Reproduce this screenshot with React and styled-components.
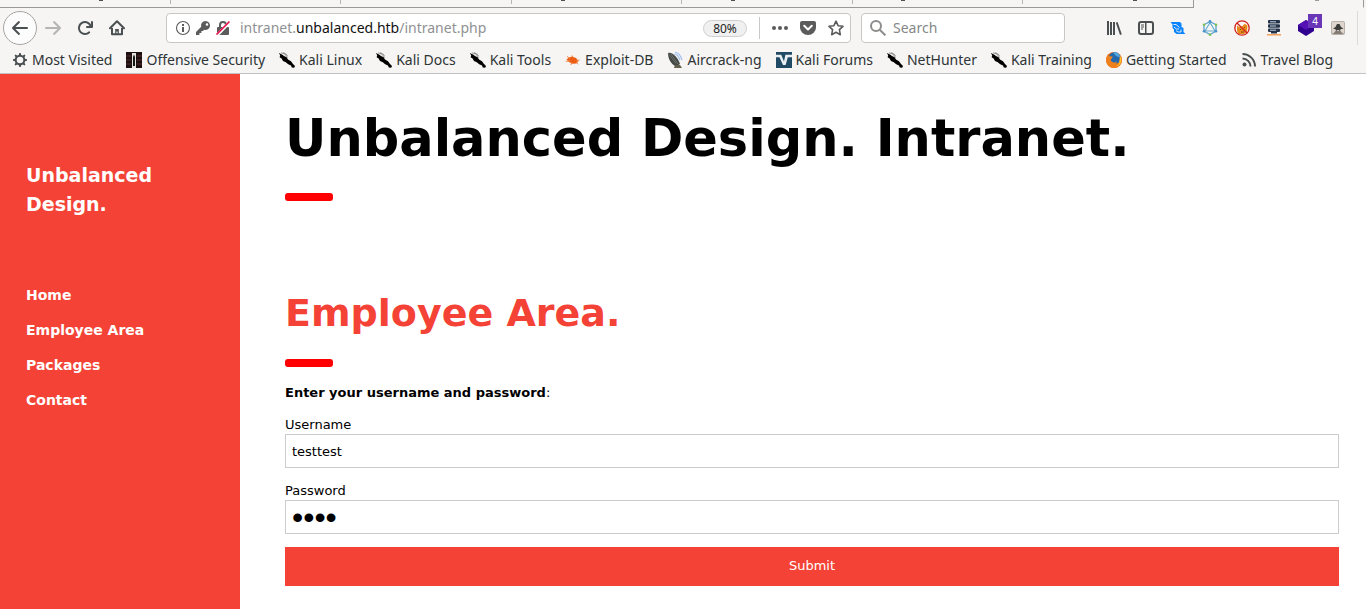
import React from "react";
import styled, { createGlobalStyle } from "styled-components";

const GlobalStyle = createGlobalStyle`
  * { box-sizing: border-box; }
  body {
    margin: 0;
    background: #fff;
    color: #000;
    font-family: "DejaVu Sans", Verdana, sans-serif;
    font-size: 13px;
    line-height: 19px;
  }
  h1, h2, h3, p { margin: 0; }
`;

const Window = styled.div`
  min-height: 100vh;
  display: flex;
  flex-direction: column;
`;

const Chrome = styled.header`
  background: #f6f5f4;
  border-bottom: 1px solid #c4c2c0;
  font-family: "Noto Sans", sans-serif;
  font-size: 14px;
  line-height: 20px;
  color: #2e3436;
`;

const TabStrip = styled.div`
  height: 8px;
  display: grid;
  grid-template-columns: repeat(8, 1fr);
  padding-right: 2px;
`;

const Tab = styled.div`
  border-bottom: 1px solid ${(p) => (p.$active ? "transparent" : "#989898")};
  border-right: ${(p) => (p.$active ? "1px solid #989898" : "0")};
  display: flex;
  justify-content: flex-end;
  &::after {
    content: "";
    width: ${(p) => (p.$active ? 0 : 1)}px;
    height: ${(p) => (p.$last ? 7 : 4)}px;
    background: ${(p) => (p.$last ? "#989898" : "#b8b6b4")};
  }
`;

const TabMark = styled.span`
  width: 4px;
  height: 1px;
  margin-right: ${(p) => p.$gap}px;
  background: ${(p) => (p.$dim ? "#9a9c9c" : "#4c5052")};
`;

const NavBar = styled.div`
  height: 40px;
  display: flex;
  align-items: center;
  padding: 0 8px 0 3px;
`;

const IconButton = styled.button`
  width: 32px;
  height: 32px;
  padding: 0;
  border: 0;
  background: none;
  display: flex;
  align-items: center;
  justify-content: center;
  position: relative;
  flex: none;
`;

const BackButton = styled(IconButton)`
  width: 34px;
  height: 34px;
  background: #fcfcfc;
  border: 1px solid #a5a5a3;
  border-radius: 50%;
`;

const AddressBar = styled.div`
  flex: 1;
  min-width: 0;
  height: 30px;
  margin-left: 33px;
  padding: 0 6px 0 8px;
  display: flex;
  align-items: center;
  gap: 4px;
  background: #fff;
  border: 1px solid #c9c6c3;
  border-radius: 4px;
`;

const Address = styled.div`
  flex: 1;
  min-width: 0;
  padding-left: 5px;
  overflow: hidden;
  white-space: nowrap;
  color: #8f9192;
  b { font-weight: 400; color: #111; }
`;

const ZoomBadge = styled.button`
  width: 44px;
  height: 17px;
  padding: 0;
  border: 1px solid #cfcfcf;
  border-radius: 9px;
  background: #f0f0f0;
  color: #222;
  font: 12px/15px "Noto Sans", sans-serif;
`;

const Divider = styled.span`
  width: 1px;
  height: ${(p) => p.$height}px;
  background: ${(p) => p.$color};
`;

const UrlActions = styled.div`
  display: flex;
  align-items: center;
  gap: 12px;
  margin-left: 8px;
  button { width: 16px; }
`;

const SearchBox = styled.label`
  width: 204px;
  height: 30px;
  margin-left: 10px;
  padding: 0 8px;
  display: flex;
  align-items: center;
  gap: 7px;
  background: #fff;
  border: 1px solid #c9c6c3;
  border-radius: 4px;
`;

const SearchInput = styled.input`
  flex: 1;
  min-width: 0;
  padding: 0;
  border: 0;
  outline: 0;
  background: none;
  font: 14px/20px "Noto Sans", sans-serif;
  &::placeholder { color: #858788; opacity: 1; }
`;

const Tools = styled.div`
  display: flex;
  align-items: center;
  margin-left: 33px;
  > span { margin-left: 3px; }
`;

const Count = styled.span`
  position: absolute;
  left: 18px;
  top: 2px;
  width: 14px;
  height: 14px;
  background: #6b35b8;
  color: #fff;
  font: 10px/14px "Noto Sans", sans-serif;
  text-align: center;
`;

const Bookmarks = styled.nav`
  height: 25px;
  padding: 0 12px 1px;
  display: flex;
  align-items: center;
  gap: 14px;
  overflow: hidden;
`;

const Bookmark = styled.a`
  display: flex;
  align-items: center;
  gap: 4px;
  color: #2e3436;
  text-decoration: none;
  white-space: nowrap;
  svg { flex: none; }
`;

const Page = styled.div`
  flex: 1;
  display: flex;
`;

const Sidebar = styled.aside`
  width: 240px;
  flex: none;
  padding: 87px 26px 0;
  background: #f44336;
  color: #fff;
`;

const Brand = styled.h3`
  font-size: 19px;
  line-height: 29px;
`;

const Menu = styled.nav`
  margin-top: 59px;
  display: flex;
  flex-direction: column;
`;

const MenuLink = styled.a`
  color: #fff;
  font-size: 14px;
  line-height: 35px;
  font-weight: 700;
  text-decoration: none;
`;

const Main = styled.main`
  flex: 1;
  min-width: 0;
  padding: 26px 27px 20px 45px;
`;

const Title = styled.h1`
  font-size: 51px;
  line-height: 77px;
`;

const AreaTitle = styled.h2`
  margin-top: 84px;
  font-size: 38px;
  line-height: 57px;
  color: #f44336;
`;

const Rule = styled.hr`
  width: 48px;
  height: 8px;
  margin: ${(p) => p.$top}px 0 0;
  border: 0;
  border-radius: 3px;
  background: #f00;
`;

const Form = styled.form`
  margin-top: 16px;
  display: flex;
  flex-direction: column;
  gap: 13px;
`;

const Field = styled.div`
  display: flex;
  flex-direction: column;
`;

const TextInput = styled.input`
  width: 100%;
  height: 34px;
  padding: 6px;
  border: 1px solid #ccc;
  border-radius: 0;
  outline: 0;
  background: #fff;
  color: #000;
  font: 13px/19px "DejaVu Sans", sans-serif;
  &[type="password"] { font: 32px/20px "Liberation Sans", sans-serif; }
`;

const Submit = styled.button`
  height: 39px;
  padding: 0 0 2px;
  border: 0;
  background: #f44336;
  color: #fff;
  font: 13px/19px "DejaVu Sans", sans-serif;
`;

const Icon = ({ children, fill = "#4a4f51", size = 16 }) => (
  <svg width={size} height={size} viewBox="0 0 16 16" fill={fill} aria-hidden="true">{children}</svg>
);

const arrow = "M15 7H3.4l4.3-4.3a1 1 0 0 0-1.4-1.4l-6 6a1 1 0 0 0 0 1.4l6 6a1 1 0 0 0 1.4-1.4L3.4 9H15a1 1 0 0 0 0-2z";

const BackIcon = () => <Icon><path d={arrow} /></Icon>;
const ForwardIcon = () => <Icon fill="#b4b4b3"><path d={arrow} transform="matrix(-1 0 0 1 16 0)" /></Icon>;
const ReloadIcon = () => (
  <Icon><path d="M15 1a1 1 0 0 0-1 1v2.4A7 7 0 1 0 8 15a7 7 0 0 0 4.95-2.05 1 1 0 0 0-1.4-1.4A5 5 0 1 1 12.5 6H10a1 1 0 0 0 0 2h5a1 1 0 0 0 1-1V2a1 1 0 0 0-1-1z" /></Icon>
);
const HomeIcon = () => (
  <Icon>
    <path d="M1 8.2 8 1.3l7 6.9" fill="none" stroke="#4a4f51" strokeWidth="2" strokeLinecap="round" strokeLinejoin="round" />
    <path d="M3 8v6.2h10V8" fill="none" stroke="#4a4f51" strokeWidth="2" strokeLinejoin="round" />
    <path d="M6.2 9h3.6v5H8.6v-2.4H7.4V14H6.2z" />
  </Icon>
);
const InfoIcon = () => (
  <Icon fill="#5b5b5b">
    <circle cx="8" cy="8" r="6.5" fill="none" stroke="#5b5b5b" strokeWidth="1.1" />
    <path d="M7 4h2v2H7zM7 7h2v5H7z" />
  </Icon>
);
const KeyIcon = () => (
  <Icon fill="#5b5b5b"><path fillRule="evenodd" d="M10.5 1a4.5 4.5 0 0 0-4.3 5.8L1 12v3h3.4v-2h2v-2h1.6l1.2-1.2A4.5 4.5 0 1 0 10.5 1zm1.5 2.2a1.3 1.3 0 1 1 0 2.6 1.3 1.3 0 0 1 0-2.6z" /></Icon>
);
const LockIcon = () => (
  <Icon fill="#5b5b5b">
    <path fillRule="evenodd" d="M4 7V5a4 4 0 0 1 8 0v2h1a1 1 0 0 1 1 1v6a1 1 0 0 1-1 1H3a1 1 0 0 1-1-1V8a1 1 0 0 1 1-1zm2 0h4V5a2 2 0 0 0-4 0z" />
    <path d="M2 15.4 14.8 2" stroke="#fff" strokeWidth="3" />
    <path d="M1.5 14.5 14.5 1.5" stroke="#e8124c" strokeWidth="1.7" />
  </Icon>
);
const DotsIcon = () => <Icon fill="#5b5b5b"><circle cx="2" cy="8" r="2" /><circle cx="8" cy="8" r="2" /><circle cx="14" cy="8" r="2" /></Icon>;
const PocketIcon = () => (
  <Icon fill="#5b5b5b">
    <path d="M2 1h12a2 2 0 0 1 2 2v4.5a8 7.5 0 0 1-16 0V3a2 2 0 0 1 2-2z" />
    <path d="m4.2 5.8 3.8 3.6 3.8-3.6" fill="none" stroke="#fff" strokeWidth="2" strokeLinecap="round" strokeLinejoin="round" />
  </Icon>
);
const StarIcon = () => (
  <Icon><path d="m8 1.2 2.1 4.5 4.9.6-3.6 3.4.9 5L8 12.3l-4.3 2.4.9-5L1 6.3l4.9-.6z" fill="none" stroke="#5b5b5b" strokeWidth="1.6" strokeLinejoin="round" /></Icon>
);
const SearchIcon = () => (
  <Icon><g fill="none" stroke="#8d8d8c" strokeWidth="2"><circle cx="6" cy="6" r="5" /><path d="m9.8 9.8 5.6 5.6" /></g></Icon>
);
const LibraryIcon = () => <Icon><path d="M1 1h2v14H1zM4 2h2v13H4zM7 2h2v13H7zM9.8 2.8l1.8-.7 4.2 12.2-1.8.7z" /></Icon>;
const SidebarIcon = () => (
  <Icon>
    <rect x="1" y="2" width="14" height="12" rx="2" fill="none" stroke="#4a4f51" strokeWidth="2" />
    <path d="M7 2h1.5v12H7zM3 4.5h3v1H3zM3 6.5h3v1H3zM3 8.5h2v1H3z" />
  </Icon>
);
const ProxyIcon = () => (
  <Icon fill="#0a84ff">
    <path d="M.5 2H10l1.5 1.5V7l2 1v4l2 2H6.5L4 12V9.5L2.5 8V4.5z" />
    <path d="M3.5 4.5H6l3.5 3M4 7l2.5 2H9m-3 1.5 2 1.5h3V9.5" fill="none" stroke="#f6f5f4" strokeWidth=".9" />
  </Icon>
);
const HexIcon = () => (
  <Icon>
    <path d="m8 1.5 6 3.3v6.4l-6 3.3-6-3.3V4.8z" fill="none" stroke="#5ba0cc" strokeWidth="1.3" />
    <path d="M8 2.5 13 11H3z" fill="none" stroke="#60a9cf" strokeWidth="1.1" />
    <g fill="#7cc251"><circle cx="2" cy="4.7" r="1.3" /><circle cx="14" cy="4.7" r="1.3" /><circle cx="8" cy="14.7" r="1.3" /></g>
    <g fill="#4a92c8"><circle cx="8" cy="1.4" r="1.3" /><circle cx="2" cy="11.2" r="1.3" /><circle cx="14" cy="11.2" r="1.3" /></g>
  </Icon>
);
const BlockIcon = () => (
  <Icon>
    <path d="M3 5.5 5.2 7l3-.7 2.5-2.5 2.8 1.7-.5 6L10 14H4.5L3 11z" fill="#e98a1d" />
    <path d="m6 9 1 1m3-3 1 1m-4 4h3" stroke="#81501d" />
    <circle cx="8" cy="8" r="7.2" fill="none" stroke="#d3211c" strokeWidth="1.3" />
    <path d="m3 3 10 10" stroke="#d3211c" strokeWidth="1.3" />
  </Icon>
);
const ServerIcon = () => (
  <Icon>
    <g fill="#233248"><rect x="2" width="12" height="3.5" rx="1" /><rect x="2" y="4.2" width="12" height="3.5" rx="1" /><rect x="2" y="8.4" width="12" height="3.5" rx="1" /><path d="M5 12h6v1.5H5z" /></g>
    <path d="M4 1.8h6M4 6h6m-6 4.2h6" stroke="#bfd0e2" />
    <path d="M1 14.8h14" stroke="#f29a4e" strokeWidth="1.4" />
  </Icon>
);
const LayersIcon = () => (
  <Icon><path d="m8 0 8 5v6l-8 5-8-5V5z" fill="#30008f" /><path d="m8 0 8 5-8 5-8-5z" fill="#5411b4" /></Icon>
);
const SpyIcon = () => (
  <Icon>
    <rect x="1" y="1" width="14" height="14" rx="2" fill="#b9b0a8" />
    <rect x="2" y="2" width="12" height="11" rx="1" fill="#ddd5ce" />
    <path d="M3 8.5 5.5 7 7 4h2.5L11 7l2.5 1.5-3 .8L10 11 8 9.8 6 11l-.5-1.7z" fill="#3b3b39" />
    <path d="M3 14l2.5-3h5l2.5 3z" fill="#857d75" />
  </Icon>
);

const GearIcon = () => (
  <Icon>
    <circle cx="8" cy="8" r="4.3" stroke="#4a4f51" fill="none" strokeWidth="2" />
    {[0, 45, 90, 135, 180, 225, 270, 315].map((a) => (
      <path key={a} d="M6.6 4 7.3 1h1.4l.7 3z" transform={`rotate(${a} 8 8)`} />
    ))}
  </Icon>
);
const OffsecIcon = () => (
  <Icon>
    <path d="M0 0h16v16H0z" fill="#1b0f0f" />
    <path d="M0 4h5M0 8h5m-5 4h5m6-8h5m-5 4h5m-5 4h5" stroke="#5a2c2a" />
    <path d="M6 1h4v15H6z" fill="#e6e2de" /><path d="M8 2.5 9 5v9H7V5z" fill="#161616" />
  </Icon>
);
const KaliIcon = () => (
  <Icon fill="#000">
    <path d="M0 1 3 2.6 5 4l2.6 1.2L9 7.4l3 1.8 1.8 2.6L16 14l-.8 1.8-2.4-.4-.8-1.8-2.8-1.4-2.4-2L4 9 2.6 6.4.6 5.2 1.2 3.4z" />
    <path d="M2 .8 5.8 2l2.8 3.6M4 .6 7.5 2.4l1 1.8" fill="none" stroke="#555" strokeWidth=".6" />
  </Icon>
);
const ExploitIcon = () => (
  <Icon fill="#ec5e13">
    <path d="M1.5 7.5 4 5.5l3-1 4 1.4 2.5 3.2-2 2.5-4 .2-4-2z" />
    <path d="m2 4.4 3 2m2-3 1 2M.8 9.5l4-1m2 2-1 2.5m5.4-2.7 2 2m-1.7-3.6L14.5 8" stroke="#f08a54" strokeWidth="1" />
  </Icon>
);
const AircrackIcon = () => (
  <Icon>
    <path d="M1 1c4-1 9 3 12 11L9 14.5C4 12 1 7 1 1z" fill="#444845" />
    <path d="m1 1 8 10.5M4 2l7 10" stroke="#757a76" strokeWidth=".8" />
    <path d="M8 13h5l2 3H7z" fill="#625f4c" />
    <path d="M7 2c3 0 5 3 6 6M8 .5c4 0 6 4 7 7.5" fill="none" stroke="#9cbdf0" strokeWidth="1.1" />
  </Icon>
);
const ForumsIcon = () => (
  <Icon><path d="M0 0h16v16H0z" fill="#204a63" /><path d="M0 2.8h5.2L8 9.6l1.4-6.8H16v2.4h-4.2L9.6 13H7L3.5 5.3H0z" fill="#e9eff2" /></Icon>
);
const FirefoxIcon = () => (
  <Icon>
    <circle cx="8" cy="8" r="8" fill="#e8641a" />
    <circle cx="8.6" cy="6.2" r="6" fill="#2469ae" />
    <path d="M7 .4c4-1 7 1 7 5L10 4z" fill="#51a6dc" />
    <path d="M.3 6 2 2.2l1.5 2 3.2.2-.9 2.1L4.6 7.8c.6 3 4.2 3.6 6.4 1.7l-.9 2.4C13 12 14 9 13.4 5.4L14.8 4c1.6 3 1.5 6.8-.8 9.3A8 8 0 0 1 .3 10z" fill="#f0801b" />
    <path d="M14 4c3 4 1 9-4 11 2.6-2 4-4.500 4-11z" fill="#fbc42e" />
  </Icon>
);
const FeedIcon = () => (
  <Icon><circle cx="3.500" cy="12.500" r="2" /><path d="M1.500 6.500a8 8 0 0 1 8 8M1.500 2a12.500 12.500 0 0 1 12.500 12.500" fill="none" stroke="#4a4f51" strokeWidth="2" /></Icon>
);

const tabs = [
  { gap: 67 }, {}, {}, { gap: 116 }, { gap: 117 }, { gap: 117 }, { gap: 56 }, { gap: 44, active: true },
];

const bookmarks = [
  ["Most Visited", GearIcon],
  ["Offensive Security", OffsecIcon],
  ["Kali Linux", KaliIcon],
  ["Kali Docs", KaliIcon],
  ["Kali Tools", KaliIcon],
  ["Exploit-DB", ExploitIcon],
  ["Aircrack-ng", AircrackIcon],
  ["Kali Forums", ForumsIcon],
  ["NetHunter", KaliIcon],
  ["Kali Training", KaliIcon],
  ["Getting Started", FirefoxIcon],
  ["Travel Blog", FeedIcon],
];

const tools = [
  ["Library", LibraryIcon],
  ["Sidebars", SidebarIcon],
  ["Proxy", ProxyIcon],
  ["GraphQL", HexIcon],
  ["Blocker", BlockIcon],
  ["Servers", ServerIcon],
  ["Layers", LayersIcon, 4],
  ["User agent", SpyIcon],
];

export default function App() {
  return (
    <>
      <GlobalStyle />
      <Window>
        <Chrome>
          <TabStrip>
            {tabs.map((t, i) => (
              <Tab key={i} $active={t.active} $last={i === 6}>
                {t.gap && <TabMark $gap={t.gap} $dim={t.active} />}
              </Tab>
            ))}
          </TabStrip>
          <NavBar>
            <BackButton aria-label="Back"><BackIcon /></BackButton>
            <IconButton aria-label="Forward"><ForwardIcon /></IconButton>
            <IconButton aria-label="Reload"><ReloadIcon /></IconButton>
            <IconButton aria-label="Home"><HomeIcon /></IconButton>
            <AddressBar>
              <InfoIcon />
              <KeyIcon />
              <LockIcon />
              <Address>intranet.<b>unbalanced.htb</b>/intranet.php</Address>
              <ZoomBadge>80%</ZoomBadge>
              <UrlActions>
                <Divider $height={22} $color="#c8c8c8" />
                <IconButton aria-label="Page actions"><DotsIcon /></IconButton>
                <IconButton aria-label="Save to Pocket"><PocketIcon /></IconButton>
                <IconButton aria-label="Bookmark this page"><StarIcon /></IconButton>
              </UrlActions>
            </AddressBar>
            <SearchBox>
              <SearchIcon />
              <SearchInput type="text" placeholder="Search" aria-label="Search" />
            </SearchBox>
            <Tools>
              {tools.map(([name, Glyph, count]) => (
                <IconButton key={name} aria-label={name}>
                  <Glyph />
                  {count && <Count>{count}</Count>}
                </IconButton>
              ))}
              <Divider $height={34} $color="#dddbd9" />
            </Tools>
          </NavBar>
          <Bookmarks>
            {bookmarks.map(([name, Glyph]) => (
              <Bookmark href="#" key={name}><Glyph />{name}</Bookmark>
            ))}
          </Bookmarks>
        </Chrome>
        <Page>
          <Sidebar>
            <Brand>Unbalanced<br />Design.</Brand>
            <Menu>
              <MenuLink href="#">Home</MenuLink>
              <MenuLink href="#">Employee Area</MenuLink>
              <MenuLink href="#">Packages</MenuLink>
              <MenuLink href="#">Contact</MenuLink>
            </Menu>
          </Sidebar>
          <Main>
            <Title>Unbalanced Design. Intranet.</Title>
            <Rule $top={16} />
            <AreaTitle>Employee Area.</AreaTitle>
            <Rule $top={17} />
            <Form onSubmit={(e) => e.preventDefault()}>
              <p><b>Enter your username and password</b>:</p>
              <Field>
                <label htmlFor="username">Username</label>
                <TextInput id="username" type="text" defaultValue="testtest" />
              </Field>
              <Field>
                <label htmlFor="password">Password</label>
                <TextInput id="password" type="password" defaultValue="test" />
              </Field>
              <Submit type="submit">Submit</Submit>
            </Form>
          </Main>
        </Page>
      </Window>
    </>
  );
}
